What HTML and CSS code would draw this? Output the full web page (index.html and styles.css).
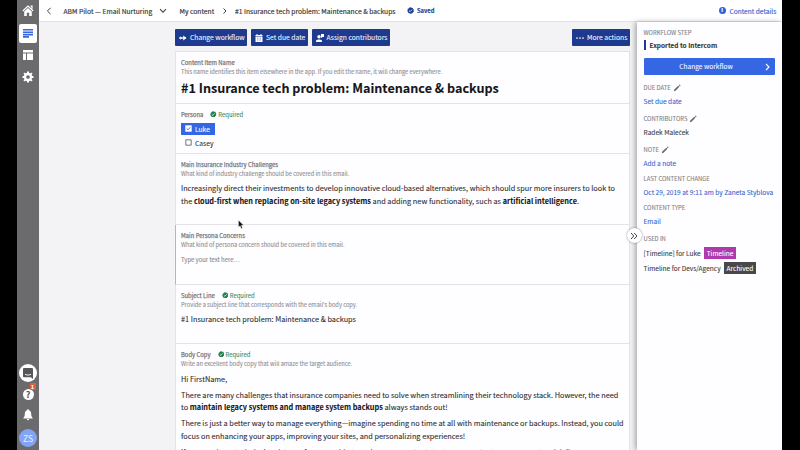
FILE: index.html
```html
<!DOCTYPE html>
<html lang="en">
<head>
<meta charset="utf-8">
<title>Content editor</title>
<link rel="stylesheet" href="styles.css">
</head>
<body>
<svg class="defs" width="0" height="0">
  <symbol id="pencil" viewBox="0 0 8 8"><path d="M.8 7.200l.5-1.700L5.300 1.700 6.400 2.800 2.500 6.700zM5.800 1.200l.8-.7L7.600 1.500l-.7.8z" fill="#666"/></symbol>
  <symbol id="check" viewBox="0 0 8 8"><path d="M4 .2l1.200.7 1.300.1.500 1.200.9.900-.3 1.200.1 1.300-1.100.7-.7 1.100-1.200-.1-1.200.5-.9-.8-1.300-.3-.3-1.200-.8-1 .6-1.100-.0-1.300 1.200-.5.700-1z" fill="currentColor"/><path d="M2.300 4.100l1.200 1.200 2.300-2.400" fill="none" stroke="#fff" stroke-width=".9"/></symbol>
</svg>
<div class="app">
  <nav class="rail">
    <svg class="home" viewBox="0 0 12 12"><path d="M.8 6L6 1.100 11.200 6M8.500 1.200h1.500v2.500" fill="none" stroke="#fff" stroke-width="1.200"/><path d="M2.200 6.600L6 3.100l3.800 3.500V11H7.200V7.800H4.800V11H2.200z" fill="#fff"/></svg>
    <div class="active"><svg width="10" height="9" viewBox="0 0 10 9"><path d="M0 .8h10M0 3.200h10M0 5.600h10M0 7.900h6" stroke="#3567e4" stroke-width="1.600"/></svg></div>
    <svg class="board" viewBox="0 0 10 10"><path d="M0 0h10v2.500H0zM0 3.500h3V10H0zM4 3.500h6V10H4z" fill="#fff"/></svg>
    <svg class="gear" viewBox="0 0 12 12"><circle cx="6" cy="6" r="3" fill="none" stroke="#fff" stroke-width="2.300"/><path d="M6 .5v2M6 9.500v2M.5 6h2M9.500 6h2M2.100 2.100l1.500 1.500M8.400 8.400l1.500 1.500M2.100 9.900l1.500-1.500M8.400 3.600l1.500-1.500" stroke="#fff" stroke-width="2"/></svg>
    <div class="spacer"></div>
    <div class="chat"><svg width="10" height="11" viewBox="0 0 10 11"><path d="M1 0h8q1 0 1 1v10L7.800 9.300H1q-1 0-1-1V1q0-1 1-1z" fill="#57575a"/><path d="M2 6.300q3 1.800 6 0" fill="none" stroke="#fff" stroke-width=".9"/></svg></div>
    <div class="help">?<span class="badge">1</span></div>
    <svg class="bell" viewBox="0 0 10 12"><path d="M5 .3c.6 0 .9.500.9 1C7.600 1.800 8.200 3.300 8.200 5c0 2 .5 3 1.500 3.900v.6H.3v-.6C1.300 8 1.800 7 1.800 5c0-1.700.6-3.200 2.300-3.700 0-.5.3-1 .9-1zM3.800 10h2.400q-.2 1.300-1.200 1.300T3.800 10z" fill="#fff"/></svg>
    <div class="avatar">ZS</div>
  </nav>
  <div class="page">
    <header class="top">
      <svg class="back" viewBox="0 0 6 8"><path d="M4.600.8L1.400 4l3.200 3.200" fill="none" stroke="#444" stroke-width="1"/></svg>
      <span class="project">ABM Pilot — Email Nurturing</span>
      <svg class="down" viewBox="0 0 8 6"><path d="M1 1.200l3 3 3-3" fill="none" stroke="#444" stroke-width="1.100"/></svg>
      <span class="crumb">My content</span>
      <svg class="sep" viewBox="0 0 6 8"><path d="M1.500 1.500L4 4 1.500 6.500" fill="none" stroke="#444" stroke-width="1"/></svg>
      <span class="item">#1 Insurance tech problem: Maintenance &amp; backups</span>
      <svg class="saved-icon" viewBox="0 0 8 8"><use href="#check"/></svg>
      <span class="saved">Saved</span>
      <span class="info">i</span>
      <span class="details">Content details</span>
    </header>
    <div class="body">
      <main class="main">
        <div class="actions">
          <button class="btn b1"><svg width="8" height="6" viewBox="0 0 8 6"><path d="M0 3h7" stroke="#fff" stroke-width="1.200"/><path d="M1.300 1.300L3.300 3 1.300 4.700zM4.200.6L7.500 3 4.200 5.400z" fill="#fff"/></svg><span>Change workflow</span></button>
          <button class="btn b2"><svg width="8" height="8" viewBox="0 0 8 8"><path d="M.5 1h1V0h1v1h3V0h1v1h1v1.200h-7zM.5 2.800h7V8h-7z" fill="#fff"/><path d="M2 4.200h4M2 6h4" stroke="#1d3a8f" stroke-width=".5" stroke-dasharray="1 .5"/></svg><span>Set due date</span></button>
          <button class="btn b3"><svg width="8" height="8" viewBox="0 0 8 8"><circle cx="3" cy="2.700" r="1.700" fill="#fff"/><path d="M0 8V6.600l2-1.200h2l2 1.200V8zM5 0h3v3H6.500L5 4z" fill="#fff"/></svg><span>Assign contributors</span></button>
          <button class="btn more"><svg width="8" height="2" viewBox="0 0 8 2"><circle cx="1" cy="1" r=".85" fill="#fff"/><circle cx="4" cy="1" r=".85" fill="#fff"/><circle cx="7" cy="1" r=".85" fill="#fff"/></svg><span>More actions</span></button>
        </div>
        <div class="card">
          <section class="s1">
            <div class="label"><b>Content Item Name</b></div>
            <div class="hint">This name identifies this item elsewhere in the app. If you edit the name, it will change everywhere.</div>
            <h1>#1 Insurance tech problem: Maintenance &amp; backups</h1>
          </section>
          <section class="s2">
            <div class="label"><b>Persona</b><span class="req"><svg viewBox="0 0 8 8"><use href="#check"/></svg>Required</span></div>
            <div class="option on"><svg viewBox="0 0 7 7"><path d="M.3.3h6.400v6.400H.3z" fill="#fff"/><path d="M1.700 3.500l1.300 1.300 2.300-2.500" fill="none" stroke="#3567e4" stroke-width=".9"/></svg>Luke</div>
            <div class="option"><svg viewBox="0 0 7 7"><path d="M.8.8h5.400v5.400H.8z" fill="#fff" stroke="#555" stroke-width=".8"/></svg>Casey</div>
          </section>
          <section class="s3">
            <div class="label"><b>Main Insurance Industry Challenges</b></div>
            <div class="hint">What kind of industry challenge should be covered in this email.</div>
            <p>Increasingly direct their investments to develop innovative cloud-based alternatives, which should spur more insurers to look to<br>the <b>cloud-first when replacing on-site legacy systems</b> and adding new functionality, such as <b>artificial intelligence</b>.</p>
          </section>
          <section class="s4">
            <div class="label"><b>Main Persona Concerns</b></div>
            <div class="hint">What kind of persona concern should be covered in this email.</div>
            <div class="placeholder">Type your text here…</div>
          </section>
          <section class="s5">
            <div class="label"><b>Subject Line</b><span class="req"><svg viewBox="0 0 8 8"><use href="#check"/></svg>Required</span></div>
            <div class="hint">Provide a subject line that corresponds with the email's body copy.</div>
            <p>#1 Insurance tech problem: Maintenance &amp; backups</p>
          </section>
          <section class="s6">
            <div class="label"><b>Body Copy</b><span class="req"><svg viewBox="0 0 8 8"><use href="#check"/></svg>Required</span></div>
            <div class="hint">Write an excellent body copy that will amaze the target audience.</div>
            <p>Hi FirstName,</p>
            <p>There are many challenges that insurance companies need to solve when streamlining their technology stack. However, the need<br>to <b>maintain legacy systems and manage system backups</b> always stands out!</p>
            <p>There is just a better way to manage everything—imagine spending no time at all with maintenance or backups. Instead, you could<br>focus on enhancing your apps, improving your sites, and personalizing experiences!</p>
            <p>If you need any technical assistance from our side to review your content strategy or content management and delivery,</p>
          </section>
        </div>
      </main>
      <aside class="side">
        <div class="collapse"><svg width="8" height="8" viewBox="0 0 8 8"><path d="M1 1l2.800 3L1 7M4.200 1L7 4 4.200 7" fill="none" stroke="#444" stroke-width="1"/></svg></div>
        <div class="cap">WORKFLOW STEP</div>
        <div class="step">Exported to Intercom</div>
        <button class="wide"><span>Change workflow</span><svg width="5" height="8" viewBox="0 0 5 8"><path d="M1 1l3 3-3 3" fill="none" stroke="#fff" stroke-width="1.100"/></svg></button>
        <div class="cap c2">DUE DATE<svg viewBox="0 0 8 8"><use href="#pencil"/></svg></div>
        <a class="val">Set due date</a>
        <div class="cap c3">CONTRIBUTORS<svg viewBox="0 0 8 8"><use href="#pencil"/></svg></div>
        <div class="val dark">Radek Male<span class="ext">&#269;</span>ek</div>
        <div class="cap c4">NOTE<svg viewBox="0 0 8 8"><use href="#pencil"/></svg></div>
        <a class="val">Add a note</a>
        <div class="cap c5">LAST CONTENT CHANGE</div>
        <a class="val">Oct 29, 2019 at 9:11 am by Zaneta Styblova</a>
        <div class="cap c6">CONTENT TYPE</div>
        <a class="val">Email</a>
        <div class="cap c7">USED IN</div>
        <div class="used"><span>[Timeline] for Luke</span><span class="tag purple">Timeline</span></div>
        <div class="used"><span>Timeline for Devs/Agency</span><span class="tag gray">Archived</span></div>
      </aside>
    </div>
  </div>
  <svg class="cursor" viewBox="0 0 6 9"><path d="M.5.3v6.800l1.600-1.400 1.100 2.700 1.200-.5-1.100-2.600h2.200z" fill="#111" stroke="#fff" stroke-width=".3"/></svg>
</div>
</body>
</html>
```
FILE: styles.css
```css
* { box-sizing: border-box; }
body { margin: 0; background: #000; font-family: "Noto Sans CJK SC", "Noto Sans", sans-serif; color: #222; overflow: hidden; -webkit-text-stroke: .08px currentColor; }
.defs { position: absolute; }
svg { display: block; flex: none; }
.app { width: 765px; height: 450px; margin-left: 17px; display: flex; position: relative; overflow: hidden; white-space: nowrap; }
.rail { width: 22px; background: #6b6b6e; display: flex; flex-direction: column; align-items: center; flex: none; }
.home { width: 12px; height: 12px; margin-top: 5px; }
.active { width: 18px; height: 19px; margin-top: 7px; background: #fff; border-radius: 2px; display: flex; align-items: center; justify-content: center; }
.board { width: 10px; height: 10px; margin-top: 7px; }
.gear { width: 12px; height: 12px; margin-top: 10.500px; }
.spacer { flex: 1; }
.chat { width: 18px; height: 18px; border-radius: 50%; background: #fff; display: flex; align-items: center; justify-content: center; margin-bottom: 7px; }
.help { width: 11px; height: 11px; border-radius: 50%; background: #fff; position: relative; color: #57575a; font-weight: 700; font-size: 9px; line-height: 11px; text-align: center; margin-bottom: 9px; }
.badge { position: absolute; left: 7px; top: -6px; width: 6px; height: 7px; border-radius: 1px; background: #d8633a; color: #fff; font-size: 5px; line-height: 7px; }
.bell { width: 10px; height: 12px; margin-bottom: 8px; }
.avatar { width: 18px; height: 18px; border-radius: 50%; background: #81a5f4; color: #e4edff; font-size: 8.500px; line-height: 18px; text-align: center; margin-bottom: 3px; }

.page { flex: 1; min-width: 0; display: flex; flex-direction: column; }
.top { height: 21px; flex: none; background: #fff; display: flex; align-items: center; font-size: 6.720px; color: #333; -webkit-text-stroke-width: .15px; }
.back { width: 6px; height: 8px; margin-left: 7px; }
.project { width: 89px; margin-left: 11.500px; }
.down { width: 8px; height: 6px; margin-left: 6px; }
.crumb { margin-left: 13px; width: 35px; }
.sep { width: 6px; height: 8px; margin-left: 7px; }
.item { margin-left: 7.500px; width: 160px; }
.saved-icon { width: 7px; height: 7px; margin-left: 12px; color: #1d3f9c; }
.top .saved { margin-left: 3px; color: #1d3f9c; font-size: 5.800px; font-weight: 700; }
.info { margin-left: auto; width: 7px; height: 7px; border-radius: 50%; background: #2b62dc; color: #fff; font-size: 5.500px; line-height: 7px; text-align: center; font-weight: 700; }
.details { width: 46px; margin: 0 6.500px 0 4px; color: #3465cf; font-size: 6.600px; }

.body { flex: 1; min-height: 0; display: flex; background: #f3f2f5; border-top: 1px solid #e3e3e6; }
.main { width: 597.500px; padding: 7px 6.500px 0 136px; flex: none; }
.actions { display: flex; gap: 4px; height: 17px; }
.btn { font: inherit; border: 0; padding: 0 0 0 4px; background: #1d3a8f; color: #f2f5ff; font-size: 6.750px; line-height: 17px; height: 17px; display: flex; align-items: center; gap: 3px; border-radius: 1px; white-space: nowrap; }
.b1 { width: 72px; }
.b2 { width: 57px; }
.b3 { width: 78px; margin-left: -.5px; }
.more { width: 58px; margin-left: auto; }
.card { margin-top: 5px; background: #fefdff; border: 1px solid #e3e2e6; border-bottom: 0; }
section { padding: 5px 0 0 5px; border-bottom: 1px solid #e3e2e6; }
.s1 { height: 52px; }
.s2 { height: 50px; }
.s3 { height: 71px; }
.s4 { height: 60px; margin-left: -1px; border-left: 1px solid #9db9ec; position: relative; }
.s5 { height: 59px; }
.s6 { height: 130px; }
.label { height: 10px; line-height: 11px; font-size: 5.900px; color: #7d7d82; display: flex; }
.label b { font-weight: 400; -webkit-text-stroke: .25px currentColor; }
.hint { height: 10px; line-height: 10.500px; font-size: 5.700px; color: #8d8d92; }
h1 { margin: 2px 0 0; font-size: 12.620px; line-height: 18px; font-weight: 700; color: #161618; }
p { margin: 0; font-size: 7.340px; line-height: 12.500px; color: #2a2a2d; }
p b { color: #151517; }
.req { display: flex; align-items: center; margin-left: 7px; gap: 1.500px; color: #3d8a5a; }
.req svg { width: 6.500px; height: 6.500px; color: #23804e; }
.option { width: 34px; height: 12px; display: flex; align-items: center; gap: 3px; padding-left: 4px; font-size: 6.700px; line-height: 12px; margin-top: 2px; color: #333; }
.option svg { width: 7px; height: 7px; }
.label + .option { margin-top: 3.500px; }
.option.on { background: #3567e4; color: #fff; }
.s3 p { margin-top: 3px; }
.placeholder { font-size: 5.900px; line-height: 10px; margin-top: 5px; color: #88888c; }
.s5 p { margin-top: 3px; }
.s6 p { margin-top: 3.500px; }

.side { flex: 1; position: relative; background: #fefdff; padding: 5.500px 7px 0 7px; box-shadow: -2px 0 5px rgba(0,0,0,.3); }
.collapse { position: absolute; left: -10px; top: 206px; width: 15px; height: 15px; border-radius: 50%; background: #fff; box-shadow: 0 0 2px rgba(0,0,0,.5); display: flex; align-items: center; justify-content: center; }
.cap { font-size: 5.850px; line-height: 10px; height: 10px; color: #7f7f84; display: flex; align-items: center; }
.cap svg { width: 8px; height: 8px; margin-left: 2px; }
.step { margin-top: 2.500px; height: 10px; line-height: 10px; border-left: 2px solid #26389c; padding-left: 4px; font-size: 6.500px; font-weight: 700; color: #333; }
.wide { font: inherit; margin-top: 8px; width: 131px; height: 17px; border: 0; border-radius: 1px; background: #3567e4; color: #f2f5ff; font-size: 6.600px; display: flex; align-items: center; padding: 0 5px 0 0; }
.wide span { flex: 1; text-align: center; line-height: 17px; padding-left: 4px; }
.c2 { margin-top: 8px; }
.val { display: block; margin-top: 3px; height: 10px; line-height: 10px; font-size: 6.570px; color: #3465cf; }
.val.dark { color: #3c3c40; }
.ext { font-family: "Noto Sans", sans-serif; font-size: 6.300px; -webkit-text-stroke: 0; line-height: 1; }
.c3, .c4 { margin-top: 8px; }
.c5, .c6 { margin-top: 6px; }
.c7 { margin-top: 8px; }
.used { display: flex; align-items: center; gap: 3px; height: 12px; margin-top: 3px; font-size: 6.550px; line-height: 12px; color: #3c3c40; }
.tag { height: 12px; padding: 0 3px; color: #fff; line-height: 12px; }
.purple { background: #b039ad; }
.gray { background: #48484b; }
.cursor { position: absolute; left: 221px; top: 220px; width: 6px; height: 9px; }
```
